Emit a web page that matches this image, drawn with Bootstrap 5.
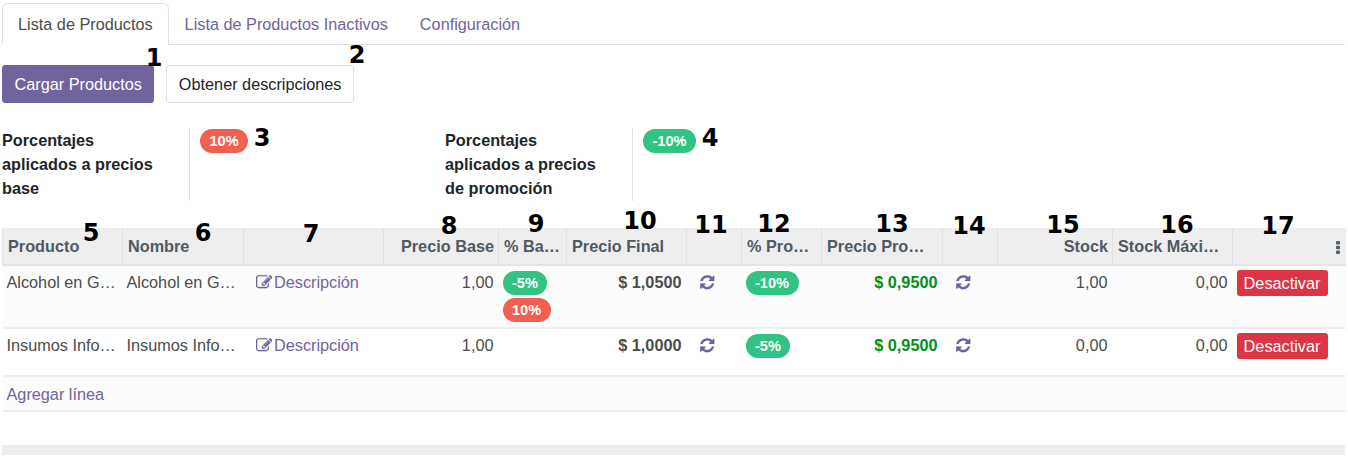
<!DOCTYPE html>
<html lang="es">
<head>
<meta charset="UTF-8" />
<title>Lista de Productos</title>
<link href="https://cdn.jsdelivr.net/npm/bootstrap@5.3.3/dist/css/bootstrap.min.css" rel="stylesheet" />
<style>
  html, body { height: 459px; overflow: hidden; }
  body { font-family: "Liberation Sans", Arial, sans-serif; font-size: 16.25px; color: #4c4c4c; background: #fff; }
  a { color: #71639e; text-decoration: none; }

  .hoja { position: relative; padding: 3px 3px 0 2px; height: 459px; }

  .nav-tabs { border-bottom-color: #dee2e6; }
  .nav-tabs .nav-link { color: #71639e; font-size: 16.25px; padding: 8px 15px; }
  .nav-tabs .nav-link.active { color: #4c4c4c; }

  .acciones { margin-top: 20px; gap: 12px; }
  .btn-morado { background: #71639e; color: #fff; border: 1px solid #71639e; padding: 6px 11.5px; height: 38px; border-radius: 3px; }
  .btn-claro { background: #fff; color: #212529; border: 1px solid #dee2e6; padding: 6px 11.5px; height: 38px; border-radius: 3px; }

  .grupos { margin-top: 25px; height: 73px; }
  .grupo { width: 443px; }
  .etiqueta { width: 188px; font-weight: 700; color: #212529; line-height: 24px; border-right: 1px solid #dee2e6; padding-right: 20px; height: 73px; }
  .valor { padding-left: 10px; }

  .pastilla { display: inline-block; height: 24px; line-height: 24px; padding: 0 9.5px; border-radius: 12px; color: #fff; font-size: 14.6px; font-weight: 700; }
  .verde { background: #30c381; }
  .roja { background: #f06050; }

  .tabla-wrap { margin-top: 27px; }
  .tabla { table-layout: fixed; width: 1343px; margin: 0; border-collapse: collapse; color: #4c4c4c; }
  .tabla col:nth-child(1) { width: 120px; }
  .tabla col:nth-child(2) { width: 121px; }
  .tabla col:nth-child(3) { width: 140px; }
  .tabla col:nth-child(4) { width: 115px; }
  .tabla col:nth-child(5) { width: 68px; }
  .tabla col:nth-child(6) { width: 120px; }
  .tabla col:nth-child(7) { width: 55px; }
  .tabla col:nth-child(8) { width: 80px; }
  .tabla col:nth-child(9) { width: 121px; }
  .tabla col:nth-child(10) { width: 55px; }
  .tabla col:nth-child(11) { width: 115px; }
  .tabla col:nth-child(12) { width: 120px; }
  .tabla col:nth-child(13) { width: 113px; }

  .tabla > :not(caption) > * > * { padding: 4px 5px 4px 4px; box-shadow: none; background: transparent; border: 0; }
  .tabla thead tr { height: 37px; background: #eeeeee; border-bottom: 2px solid #e3e6e9; }
  .tabla > thead > tr > th { color: #4f5963; font-weight: 700; line-height: 26px; padding-left: 5px; padding-right: 4px; border-right: 1px solid #dee2e6; white-space: nowrap; overflow: hidden; text-overflow: ellipsis; vertical-align: middle; }
  .tabla > thead > tr > th:first-child { border-left: 1px solid #e3e6e9; }
  .tabla > thead > tr > th:last-child { border-right: 0; padding-right: 6px; }
  .tabla tbody tr { border-bottom: 2px solid #eeeeee; }
  .tabla > tbody > tr > td { color: #4c4c4c; line-height: 24px; vertical-align: top; white-space: nowrap; overflow: hidden; text-overflow: ellipsis; }
  .fila-alta { height: 63px; background: #fcfcfc; }
  .fila-media { height: 48px; background: #fff; }
  .fila-agregar { height: 35px; background: #fcfcfc; }
  .tabla > tbody > .fila-agregar > td { padding-top: 5px; }
  .tabla > tbody > tr > td.pilas { padding-top: 5px; padding-bottom: 0; white-space: normal; }
  .pilas .pastilla { display: block; width: fit-content; margin-bottom: 3px; }
  .tabla > tbody > tr > td.precio { font-weight: 700; }
  .tabla > tbody > tr > td.precio-promo { color: #008f1a; font-weight: 700; }
  .tabla > tbody > tr > td.descr { padding-left: 12px; }
  .ico { width: 16.5px; height: 16.5px; fill: #71639e; stroke: #71639e; stroke-width: 20; vertical-align: -2px; }
  .ico-edit { margin-right: 2px; }
  .ico-giro { margin-left: 8px; }
  .tabla > tbody > tr > td > .btn-baja { background: #dc3545; color: #fff; border: 0; height: 26px; width: 91px; padding: 0; line-height: 26px; border-radius: 3px; display: block; }
  .kebab { width: 4px; height: 13px; fill: #4f6070; vertical-align: -2px; }

  .barra { margin-top: 33px; height: 10px; background: #eeeeee; width: 1343px; }

  .nota { position: absolute; transform: translate(-50%, -50%); font-family: "DejaVu Sans", sans-serif; font-weight: 700; font-size: 24px; line-height: 1; color: #000; }
  .n1 { left: 154px; top: 58px; } .n2 { left: 357px; top: 55px; } .n3 { left: 262px; top: 138px; }
  .n4 { left: 710px; top: 138px; } .n5 { left: 91px; top: 233px; } .n6 { left: 203px; top: 233px; }
  .n7 { left: 311px; top: 234px; } .n8 { left: 449px; top: 226px; } .n9 { left: 536px; top: 224px; }
  .n10 { left: 640px; top: 221px; } .n11 { left: 711px; top: 225px; } .n12 { left: 774px; top: 224px; }
  .n13 { left: 892px; top: 224px; } .n14 { left: 969px; top: 226px; } .n15 { left: 1063px; top: 225px; }
  .n16 { left: 1177px; top: 225px; } .n17 { left: 1278px; top: 226px; }
</style>
</head>
<body>

<svg class="d-none">
  <symbol id="i-edit" viewBox="0 0 1792 1792"><path d="M888 1184l116-116-152-152-116 116v56h96v96h56zm440-720q-16-16-33 1l-350 350q-17 17-1 33t33-1l350-350q17-17 1-33zm80 594v190q0 119-84.5 203.5t-203.5 84.5h-832q-119 0-203.5-84.5t-84.5-203.5v-832q0-119 84.5-203.5t203.5-84.5h832q63 0 117 25 15 7 18 23 3 17-9 29l-49 49q-14 14-32 8-23-6-45-6h-832q-66 0-113 47t-47 113v832q0 66 47 113t113 47h832q66 0 113-47t47-113v-126q0-13 9-22l64-64q15-15 35-7t20 29zm-96-738l288 288-672 672h-288v-288zm444 132l-92 92-288-288 92-92q28-28 68-28t68 28l152 152q28 28 28 68t-28 68z"/></symbol>
  <symbol id="i-giro" viewBox="0 0 1792 1792"><path d="M1639 1056q0 5-1 7-64 268-268 434.5t-478 166.5q-146 0-282.5-55t-243.5-157l-129 129q-19 19-45 19t-45-19-19-45v-448q0-26 19-45t45-19h448q26 0 45 19t19 45-19 45l-137 137q71 66 161 102t187 36q134 0 250-65t186-179q11-17 53-117 8-23 30-23h192q13 0 22.5 9.5t9.5 22.5zm25-800v448q0 26-19 45t-45 19h-448q-26 0-45-19t-19-45 19-45l138-138q-148-137-349-137-134 0-250 65t-186 179q-11 17-53 117-8 23-30 23h-199q-13 0-22.5-9.5t-9.5-22.5v-7q65-268 270-434.5t480-166.5q146 0 284 55.5t245 156.5l130-129q19-19 45-19t45 19 19 45z"/></symbol>
</svg>

<div class="hoja">
  <ul class="nav nav-tabs">
    <li class="nav-item"><a class="nav-link active" href="#">Lista de Productos</a></li>
    <li class="nav-item"><a class="nav-link" href="#">Lista de Productos Inactivos</a></li>
    <li class="nav-item"><a class="nav-link" href="#">Configuración</a></li>
  </ul>

  <div class="d-flex acciones">
    <button class="btn-morado">Cargar Productos</button>
    <button class="btn-claro">Obtener descripciones</button>
  </div>

  <div class="d-flex grupos">
    <div class="d-flex grupo">
      <div class="etiqueta">Porcentajes aplicados a precios base</div>
      <div class="valor"><span class="pastilla roja">10%</span></div>
    </div>
    <div class="d-flex grupo">
      <div class="etiqueta">Porcentajes aplicados a precios de promoción</div>
      <div class="valor"><span class="pastilla verde">-10%</span></div>
    </div>
  </div>

  <div class="tabla-wrap">
    <table class="table tabla">
      <colgroup>
        <col><col><col><col><col><col><col><col><col><col><col><col><col>
      </colgroup>
      <thead>
        <tr>
          <th>Producto</th>
          <th>Nombre</th>
          <th></th>
          <th class="text-end">Precio Base</th>
          <th>% Base Aplicado</th>
          <th>Precio Final</th>
          <th></th>
          <th>% Promoción</th>
          <th>Precio Promoción</th>
          <th></th>
          <th class="text-end">Stock</th>
          <th>Stock Máximo Global</th>
          <th class="text-end"><svg class="kebab" viewBox="0 0 4 13"><rect y="0" width="4" height="3.4" rx="1"/><rect y="4.8" width="4" height="3.4" rx="1"/><rect y="9.6" width="4" height="3.4" rx="1"/></svg></th>
        </tr>
      </thead>
      <tbody>
        <tr class="fila-alta">
          <td>Alcohol en Gel 500 ml</td>
          <td>Alcohol en Gel 500 ml</td>
          <td class="descr"><a href="#"><svg class="ico ico-edit"><use href="#i-edit"/></svg>Descripción</a></td>
          <td class="text-end">1,00</td>
          <td class="pilas"><span class="pastilla verde">-5%</span><span class="pastilla roja">10%</span></td>
          <td class="text-end precio">$ 1,0500</td>
          <td><a href="#"><svg class="ico ico-giro"><use href="#i-giro"/></svg></a></td>
          <td class="pilas"><span class="pastilla verde">-10%</span></td>
          <td class="text-end precio-promo">$ 0,9500</td>
          <td><a href="#"><svg class="ico ico-giro"><use href="#i-giro"/></svg></a></td>
          <td class="text-end">1,00</td>
          <td class="text-end">0,00</td>
          <td><button class="btn-baja">Desactivar</button></td>
        </tr>
        <tr class="fila-media">
          <td>Insumos Informáticos</td>
          <td>Insumos Informáticos</td>
          <td class="descr"><a href="#"><svg class="ico ico-edit"><use href="#i-edit"/></svg>Descripción</a></td>
          <td class="text-end">1,00</td>
          <td></td>
          <td class="text-end precio">$ 1,0000</td>
          <td><a href="#"><svg class="ico ico-giro"><use href="#i-giro"/></svg></a></td>
          <td class="pilas"><span class="pastilla verde">-5%</span></td>
          <td class="text-end precio-promo">$ 0,9500</td>
          <td><a href="#"><svg class="ico ico-giro"><use href="#i-giro"/></svg></a></td>
          <td class="text-end">0,00</td>
          <td class="text-end">0,00</td>
          <td><button class="btn-baja">Desactivar</button></td>
        </tr>
        <tr class="fila-agregar">
          <td colspan="13"><a href="#">Agregar línea</a></td>
        </tr>
      </tbody>
    </table>
    <div class="barra"></div>
  </div>

  <span class="nota n1">1</span><span class="nota n2">2</span><span class="nota n3">3</span><span class="nota n4">4</span>
  <span class="nota n5">5</span><span class="nota n6">6</span><span class="nota n7">7</span><span class="nota n8">8</span>
  <span class="nota n9">9</span><span class="nota n10">10</span><span class="nota n11">11</span><span class="nota n12">12</span>
  <span class="nota n13">13</span><span class="nota n14">14</span><span class="nota n15">15</span><span class="nota n16">16</span>
  <span class="nota n17">17</span>
</div>

</body>
</html>
